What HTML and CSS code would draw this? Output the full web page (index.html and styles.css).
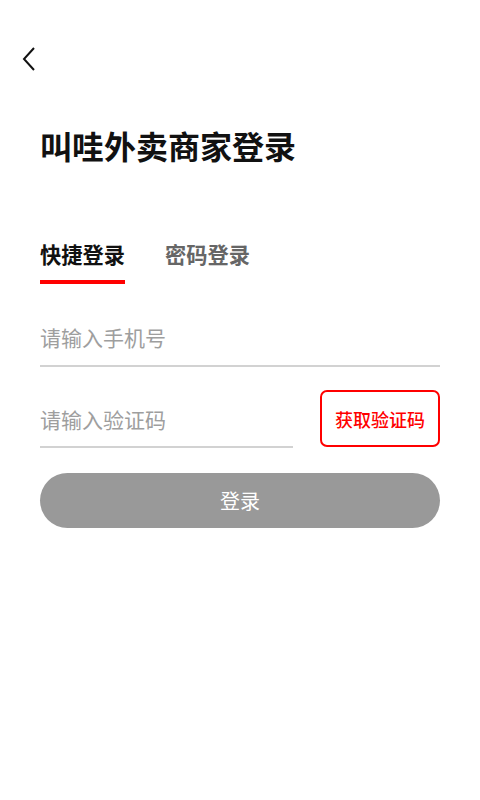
FILE: index.html
```html
<!DOCTYPE html>
<html lang="zh-CN">
<head>
    <meta charset="UTF-8">
    <meta name="viewport" content="width=device-width, initial-scale=1.0">
    <title>叫哇外卖商家登录</title>
    <link rel="stylesheet" href="styles.css">
</head>
<body>
    <div class="nav">
        <button class="back" aria-label="返回">
            <svg width="16" height="26" viewBox="0 0 16 26">
                <path d="M13 2 L3 13 L13 24" fill="none" stroke="#111" stroke-width="2"/>
            </svg>
        </button>
    </div>

    <div class="page">
        <h1 class="title">叫哇外卖商家登录</h1>

        <div class="tabs">
            <div class="tab active">快捷登录</div>
            <div class="tab">密码登录</div>
        </div>

        <div class="field">
            <input type="text" placeholder="请输入手机号">
        </div>

        <div class="code-row">
            <div class="field">
                <input type="text" placeholder="请输入验证码">
            </div>
            <button class="code-btn">获取验证码</button>
        </div>

        <button class="login">登录</button>
    </div>
</body>
</html>
```

FILE: styles.css
```css
*{
    margin: 0;
    padding: 0;
    box-sizing: border-box;
}
body{
    background: #fff;
    font-family: "Noto Sans CJK SC", "Noto Sans", sans-serif;
    color: #111;
}
.nav{
    padding: 46px 0 0 21px;
    height: 74px;
}
.back{
    background: none;
    border: none;
    display: block;
}
.page{
    padding: 0 40px;
}
.title{
    margin-top: 49px;
    font-size: 32px;
    line-height: 44px;
    font-weight: bold;
    color: #111;
}
.tabs{
    display: flex;
    gap: 40px;
    margin-top: 72px;
}
.tab{
    font-size: 21.25px;
    line-height: 30px;
    font-weight: bold;
    color: #666;
    padding-bottom: 11px;
    border-bottom: 4px solid transparent;
}
.tab.active{
    color: #111;
    border-bottom-color: #f00;
}
.field{
    border-bottom: 2px solid #d2d2d2;
}
.field input{
    display: block;
    width: 100%;
    height: 81px;
    padding-top: 24px;
    border: none;
    outline: none;
    background: none;
    font-family: "Noto Sans CJK SC", "Noto Sans", sans-serif;
    font-size: 21px;
    color: #111;
}
.field input::placeholder{
    color: #9e9e9e;
}
.code-row{
    display: flex;
    align-items: flex-end;
    gap: 27px;
}
.code-row .field{
    flex: 1;
}
.code-row .field input{
    height: 79px;
}
.code-btn{
    width: 120px;
    height: 57px;
    margin-bottom: 1px;
    border: 2px solid #f00;
    border-radius: 7px;
    background: #fff;
    color: #f00;
    font-family: "Noto Sans CJK SC", "Noto Sans", sans-serif;
    font-size: 18px;
    font-weight: 500;
}
.login{
    display: block;
    width: 100%;
    height: 55px;
    margin-top: 25px;
    border: none;
    border-radius: 28px;
    background: #999;
    color: #fff;
    font-family: "Noto Sans CJK SC", "Noto Sans", sans-serif;
    font-size: 20px;
}
```
